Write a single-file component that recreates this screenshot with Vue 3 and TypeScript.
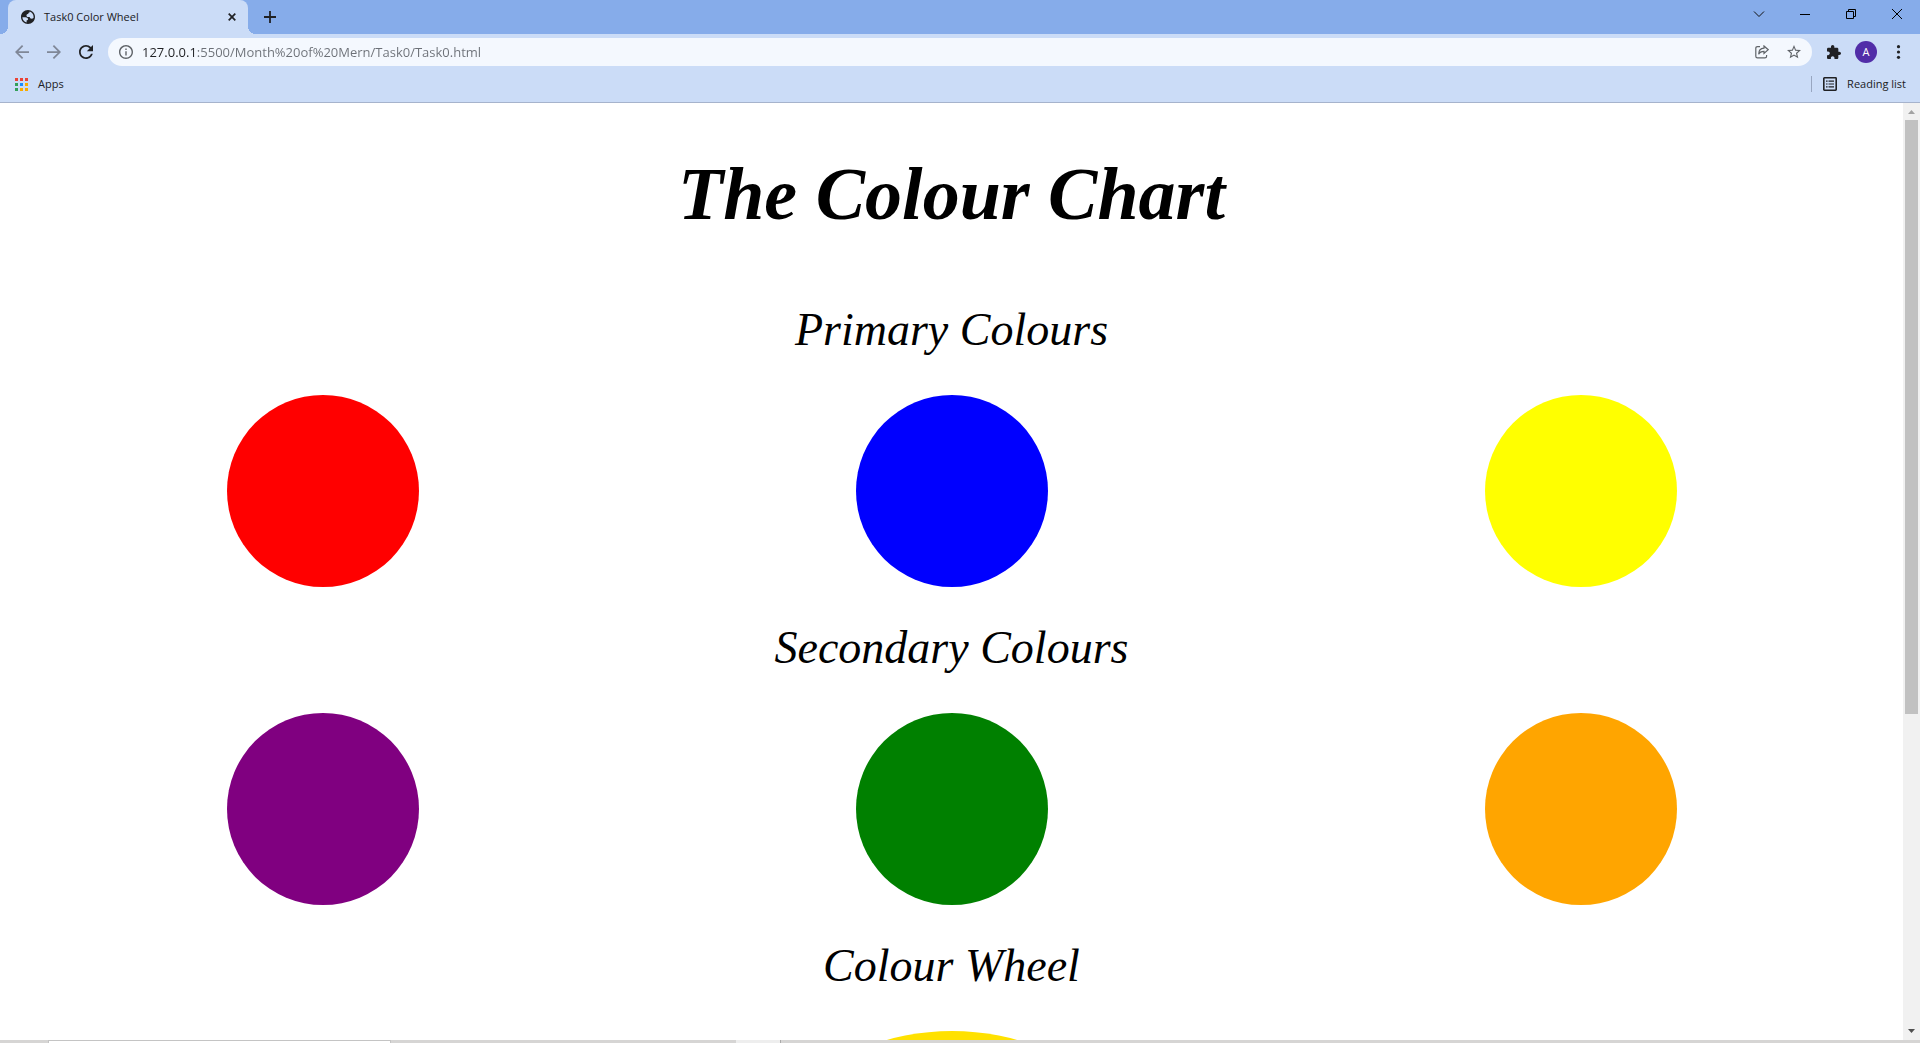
<script setup lang="ts">
interface Swatch {
  name: string
  color: string
}
interface Group {
  title: string
  swatches: Swatch[]
}

const url = '127.0.0.1:5500/Month%20of%20Mern/Task0/Task0.html'

const groups: Group[] = [
  {
    title: 'Primary Colours',
    swatches: [
      { name: 'Red', color: 'red' },
      { name: 'Blue', color: 'blue' },
      { name: 'Yellow', color: 'yellow' },
    ],
  },
  {
    title: 'Secondary Colours',
    swatches: [
      { name: 'Purple', color: 'purple' },
      { name: 'Green', color: 'green' },
      { name: 'Orange', color: 'orange' },
    ],
  },
]

const appDots = ['#ea4335', '#ea4335', '#ea4335', '#34a05a', '#1a8cff', '#f9ab00', '#34a05a', '#f9ab00', '#f9ab00']
</script>

<template>
  <div class="browser">
    <header class="tabs">
      <div class="tab">
        <svg class="i14" viewBox="2 2 20 20" fill="#202124"><path d="M12 2C6.480 2 2 6.480 2 12s4.480 10 10 10 10-4.480 10-10S17.520 2 12 2zM4 12.500h4.500c2 0 3.500 1 3.500 2.800 0 1.200-.8 1.700-2 1.700v2.700C6.500 19 4 16 4 12.500zM20 12c0 .5-.1 1-.2 1.500-.6.800-1.500 1-2.500 1-1.800 0-2.800-1-2.800-2.500h-2.500c-1.500 0-2.200-1-2.200-2.200s1-2 2.500-2c0-1.300.6-2.200 2-2.200V4.300C17.500 5 20 8.200 20 12z" /></svg>
        <span class="tab-title">Task0 Color Wheel</span>
        <button aria-label="Close tab"><svg class="i8" viewBox="0 0 8 8"><path d="M.7.7l6.600 6.600M7.300.7L.7 7.300" stroke="#202124" stroke-width="1.700" /></svg></button>
      </div>
      <button class="new" aria-label="New tab"><svg class="i12" viewBox="0 0 12 12"><path d="M6 0v12M0 6h12" stroke="#202124" stroke-width="1.800" /></svg></button>
      <div class="window-buttons">
        <button aria-label="Search tabs"><svg class="i12" viewBox="0 0 12 12" fill="none" stroke="#111"><path d="M1 3.500l5 5 5-5" /></svg></button>
        <button aria-label="Minimize"><svg class="i12" viewBox="0 0 12 12" fill="none" stroke="#000"><path d="M1 6.500h10" /></svg></button>
        <button aria-label="Restore"><svg class="i12" viewBox="0 0 12 12" fill="none" stroke="#000"><path d="M1.500 3.500h7v7h-7zM3.500 3.500v-2h7v7h-2" /></svg></button>
        <button aria-label="Close"><svg class="i12" viewBox="0 0 12 12" fill="none" stroke="#000"><path d="M1 1l10 10M11 1L1 11" /></svg></button>
      </div>
    </header>

    <nav class="toolbar">
      <button aria-label="Back"><svg class="i14" viewBox="4 4 16 16" fill="#7f8797"><path d="M20 11H7.830l5.590-5.590L12 4l-8 8 8 8 1.410-1.410L7.830 13H20v-2z" /></svg></button>
      <button aria-label="Forward"><svg class="i14" viewBox="4 4 16 16" fill="#7f8797"><path d="M12 4l-1.410 1.410L16.170 11H4v2h12.170l-5.580 5.590L12 20l8-8z" /></svg></button>
      <button aria-label="Reload"><svg class="i14" viewBox="4 4 16 16" fill="#202124"><path d="M17.650 6.350C16.200 4.900 14.210 4 12 4c-4.420 0-7.990 3.580-7.990 8s3.570 8 7.990 8c3.730 0 6.840-2.550 7.730-6h-2.080c-.82 2.330-3.040 4-5.650 4-3.310 0-6-2.690-6-6s2.690-6 6-6c1.660 0 3.140.69 4.220 1.780L13 11h7V4l-2.350 2.350z" /></svg></button>
      <div class="omnibox">
        <svg class="i14" viewBox="2 2 20 20" fill="#5f6368"><path d="M11 17h2v-6h-2v6zm1-15C6.480 2 2 6.480 2 12s4.480 10 10 10 10-4.480 10-10S17.520 2 12 2zm0 18c-4.410 0-8-3.590-8-8s3.590-8 8-8 8 3.590 8 8-3.590 8-8 8zM11 9h2V7h-2v2z" /></svg>
        <input :value="url" aria-label="Address" spellcheck="false" />
        <button aria-label="Share"><svg class="i14" viewBox="0 0 14 14" fill="none" stroke="#5f6368" stroke-width="1.200"><path d="M5 1.600H2.500Q.8 1.600.8 3.300v7.900q0 1.700 1.700 1.700h7.400q1.700 0 1.700-1.700V10M9 1l4.200 3.700L9 8.400V6.300C6.500 6.300 4.700 7 3.700 9.200 3.700 5.500 5.700 3.400 9 3.200z" /></svg></button>
        <button aria-label="Bookmark this tab"><svg class="i14" viewBox="2 2 20 20" fill="#5f6368"><path d="M22 9.240l-7.190-.62L12 2 9.190 8.630 2 9.240l5.460 4.730L5.820 21 12 17.270 18.180 21l-1.630-7.030L22 9.240zM12 15.400l-3.760 2.270 1-4.280-3.320-2.880 4.380-.38L12 6.100l1.710 4.040 4.380.38-3.320 2.880 1 4.280L12 15.400z" /></svg></button>
      </div>
      <button aria-label="Extensions"><svg class="i14" viewBox="2 1 21 21" fill="#202124"><path d="M20.500 11H19V7c0-1.100-.9-2-2-2h-4V3.500C13 2.120 11.880 1 10.500 1S8 2.120 8 3.500V5H4c-1.100 0-1.990.9-1.990 2v3.800H3.500c1.490 0 2.700 1.210 2.700 2.700s-1.210 2.700-2.700 2.700H2V20c0 1.100.9 2 2 2h3.800v-1.500c0-1.490 1.210-2.700 2.700-2.700 1.490 0 2.700 1.210 2.700 2.700V22H17c1.100 0 2-.9 2-2v-4h1.500c1.380 0 2.500-1.120 2.500-2.500S21.880 11 20.500 11z" /></svg></button>
      <button class="avatar" aria-label="Profile">A</button>
      <button aria-label="Menu"><svg class="i14" viewBox="0 0 14 14" fill="#202124"><circle cx="7.500" cy="1.700" r="1.600" /><circle cx="7.500" cy="7" r="1.600" /><circle cx="7.500" cy="12.300" r="1.600" /></svg></button>
    </nav>

    <div class="bookmarks">
      <a href="#apps">
        <span class="apps"><i v-for="(c, n) in appDots" :key="n" :style="{ background: c }"></i></span>
        Apps
      </a>
      <button class="reading">
        <svg class="i14" viewBox="0 0 14 14"><rect x=".8" y=".8" width="12.400" height="12.400" rx=".6" fill="none" stroke="#202124" stroke-width="1.600" /><path d="M3 4.200h1.600M5.500 4.200H11M3 7h1.600M5.500 7H11M3 9.800h1.600M5.500 9.800H11" stroke="#202124" stroke-width="1.200" /></svg>
        Reading list
      </button>
    </div>

    <div class="viewport">
      <main>
        <h1>The Colour Chart</h1>
        <section v-for="g in groups" :key="g.title">
          <h2>{{ g.title }}</h2>
          <div class="row">
            <div v-for="s in g.swatches" :key="s.name" class="cell">
              <div class="swatch" role="img" :aria-label="s.name" :style="{ background: s.color }"></div>
            </div>
          </div>
        </section>
        <section>
          <h2>Colour Wheel</h2>
          <div class="wheel" role="img" aria-label="Colour wheel"></div>
        </section>
      </main>
      <div class="scrollbar" aria-hidden="true">
        <svg viewBox="0 0 17 17"><path d="M5 11l3.500-4 3.500 4z" fill="#a3a3a3" /></svg>
        <div class="thumb"></div>
        <div class="track"></div>
        <svg viewBox="0 0 17 17"><path d="M5 6l3.500 4L12 6z" fill="#505050" /></svg>
      </div>
    </div>

    <footer class="taskbar" aria-hidden="true">
      <div class="search"></div>
      <div class="active"></div>
    </footer>
  </div>
</template>

<style>
body {
  margin: 0;
  overflow: hidden;
}
</style>

<style scoped>
.browser {
  display: flex;
  flex-direction: column;
  height: 100vh;
  overflow: hidden;
  background: #fff;
  color: #202124;
  font: 11px/16px "Open Sans", "Noto Sans", sans-serif;
}
button {
  display: flex;
  align-items: center;
  justify-content: center;
  padding: 0;
  border: 0;
  background: none;
  color: inherit;
  font: inherit;
}
svg {
  display: block;
  flex: none;
}
.i8 { width: 8px; height: 8px; }
.i12 { width: 12px; height: 12px; }
.i14 { width: 14px; height: 14px; }

.tabs {
  display: flex;
  height: 34px;
  background: #86acea;
}
.tab {
  position: relative;
  display: flex;
  align-items: center;
  box-sizing: border-box;
  width: 240px;
  margin-left: 8px;
  padding: 0 12px 0 13px;
  border-radius: 8px 8px 0 0;
  background: #cbdcf7;
}
.tab::before,
.tab::after {
  content: "";
  position: absolute;
  bottom: 0;
  width: 8px;
  height: 8px;
}
.tab::before {
  right: 100%;
  background: radial-gradient(circle at 0 0, transparent 8px, #cbdcf7 8px);
}
.tab::after {
  left: 100%;
  background: radial-gradient(circle at 100% 0, transparent 8px, #cbdcf7 8px);
}
.tab-title {
  flex: 1;
  margin-left: 9px;
}
.new {
  width: 44px;
}
.window-buttons {
  display: flex;
  height: 28px;
  margin-left: auto;
}
.window-buttons button {
  width: 46px;
}

.toolbar {
  display: flex;
  align-items: center;
  height: 36px;
  padding: 0 15px;
  gap: 18px;
  background: #cbdcf7;
}
.omnibox {
  display: flex;
  flex: 1;
  align-items: center;
  height: 28px;
  margin: 0 -3px;
  padding: 0 11px;
  border-radius: 14px;
  background: #f4f8fe;
}
.omnibox input {
  flex: 1;
  min-width: 0;
  height: 24px;
  margin-left: 9px;
  padding: 0;
  border: 0;
  outline: 0;
  background: linear-gradient(90deg, #202124 53px, #6c7077 53px) text;
  color: transparent;
  font: 13px/24px "Open Sans", "Noto Sans", sans-serif;
}
.omnibox button + button {
  margin-left: 18px;
}
.avatar {
  width: 22px;
  height: 22px;
  margin: 0 -4px;
  border-radius: 50%;
  background: #512da8;
  color: #fff;
}

.bookmarks {
  display: flex;
  align-items: center;
  justify-content: space-between;
  height: 28px;
  padding: 0 14px 4px 15px;
  border-bottom: 1px solid #a6b3cc;
  background: #cbdcf7;
}
.bookmarks a {
  display: flex;
  align-items: center;
  gap: 10px;
  color: inherit;
  text-decoration: none;
}
.apps {
  display: grid;
  grid-template-columns: repeat(3, 3px);
  gap: 2px;
}
.apps i {
  height: 3px;
}
.reading {
  gap: 10px;
  padding-left: 11px;
  border-left: 1px solid #98a6c0;
}

.viewport {
  display: flex;
  flex: 1;
  min-height: 0;
}
main {
  flex: 1;
  overflow: hidden;
  padding: 0 8px;
  color: #000;
  font-family: "Liberation Serif", serif;
  font-style: italic;
  text-align: center;
}
h1 {
  margin: 0;
  padding-top: 16px;
  font-size: 74px;
  font-weight: 700;
  line-height: 150px;
}
h2 {
  margin: 0;
  padding-bottom: 4px;
  font-size: 46px;
  font-weight: 400;
  line-height: 122px;
}
.row {
  display: flex;
}
.cell {
  display: flex;
  flex: 1;
  justify-content: center;
}
.swatch {
  width: 192px;
  height: 192px;
  border-radius: 50%;
}
.wheel {
  width: 480px;
  height: 480px;
  margin: 0 auto;
  border-radius: 50%;
  background: #ffe100;
}
.scrollbar {
  display: flex;
  flex-direction: column;
  width: 17px;
  background: #f1f1f1;
}
.thumb {
  flex: 594;
  margin: 0 2px;
  background: #c1c1c1;
}
.track {
  flex: 309;
}

.taskbar {
  display: flex;
  height: 3px;
  background: #d6d5d4;
}
.search {
  box-sizing: border-box;
  width: 343px;
  margin-left: 48px;
  border: 1px solid #c4c4c4;
  border-bottom: 0;
  background: #fff;
}
.active {
  width: 44px;
  margin-left: 345px;
  border-right: 1px solid #aaa;
  background: #eee;
}
</style>
